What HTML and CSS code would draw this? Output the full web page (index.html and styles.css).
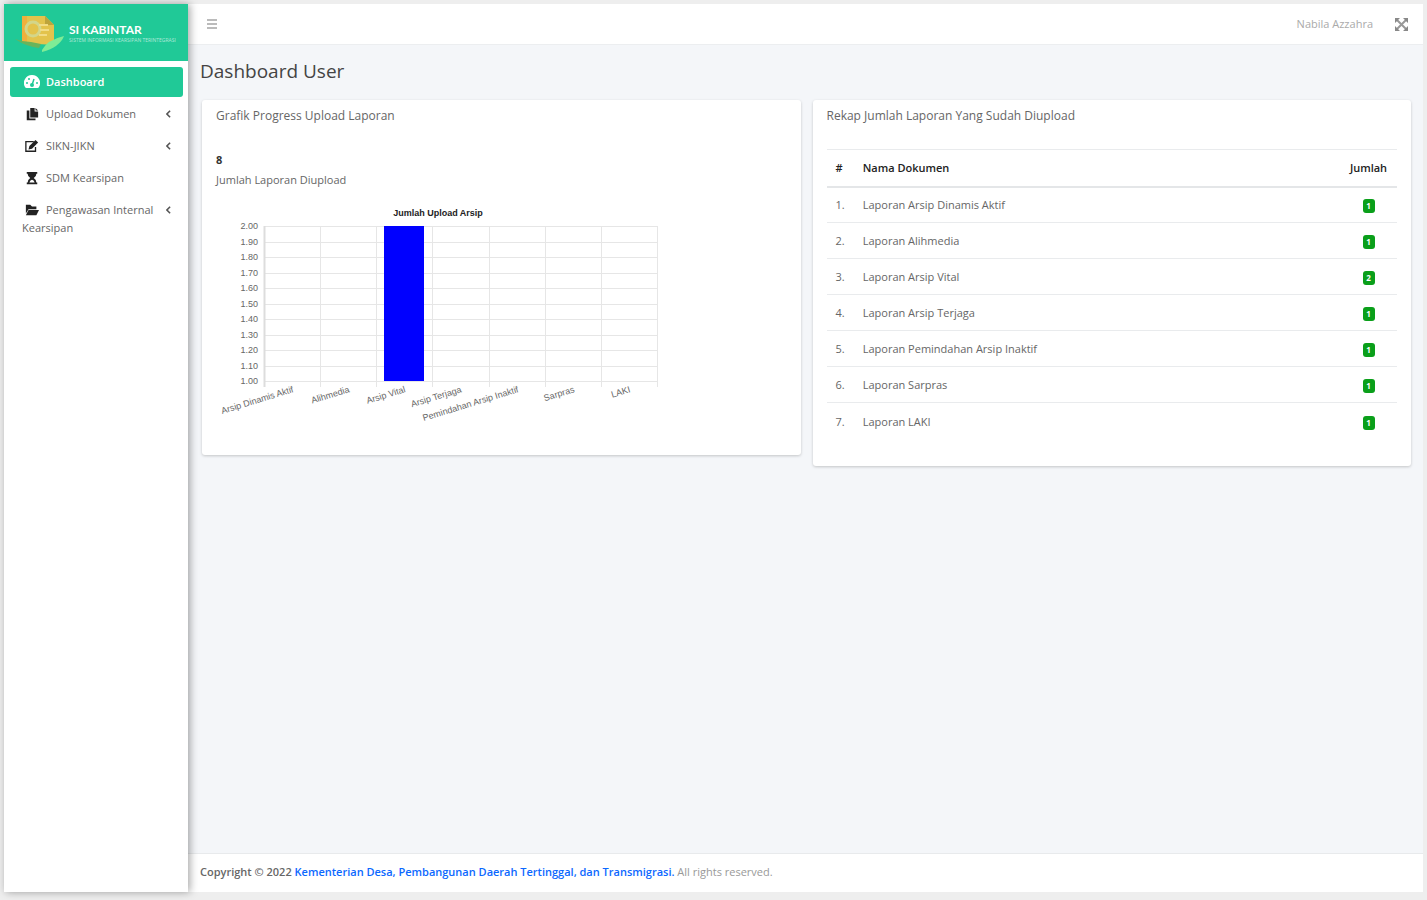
FILE: index.html
```html
<!DOCTYPE html>
<html lang="id">
<head>
  <meta charset="UTF-8">
  <meta name="viewport" content="width=device-width, initial-scale=1.0">
  <title>Dashboard User</title>
  <link rel="stylesheet" href="styles.css">
</head>
<body>

<div class="wrapper">
  <aside class="sidebar">
    <a href="#" class="brand">
      <svg class="brand-logo" width="54" height="42" viewBox="0 0 54 42">
        <path d="M11 4h23l9 9v20l-32-2z" fill="#e3c34c"/>
        <path d="M34 4v9h9z" fill="#bda43c"/>
        <path d="M11 4h5v27l-5-1z" fill="#f0b03c"/>
        <circle cx="22" cy="17" r="7" fill="none" stroke="#d3d68a" stroke-width="3"/>
        <path d="M28 13h9M29 18h9M28 23h8" stroke="#f2dc85" stroke-width="2"/>
        <path d="M4 27q8 3 16 3l10 2-2 4q-12-1-24-9z" fill="#68b45c"/>
        <path d="M31 38q5-10 22-14-4 11-22 16z" fill="#7fec96"/>
      </svg>
      <span class="brand-text">
        <strong>SI KABINTAR</strong>
        <small>SISTEM INFORMASI KEARSIPAN TERINTEGRASI</small>
      </span>
    </a>

    <nav class="menu">
      <a href="#" class="menu-item active">
        <svg class="icon" viewBox="0 0 16 16"><path fill="currentColor" d="M8 1a8 8 0 0 0-7 12q.5 1 1.500 1h11q1 0 1.500-1A8 8 0 0 0 8 1z"/><path d="M8 11l2-6" stroke="#20c997" stroke-width="1.500"/><g fill="#20c997"><circle cx="3" cy="9" r="1"/><circle cx="5" cy="5" r="1"/><circle cx="13" cy="9" r="1"/><circle cx="8" cy="11" r="2"/></g></svg>
        <span>Dashboard</span>
      </a>
      <a href="#" class="menu-item">
        <svg class="icon" viewBox="0 0 16 16"><path fill="currentColor" d="M6 1h5v4h4v7H6z"/><path fill="currentColor" d="M12 1l3 3h-3zM2 4h3v9h7v2H2z"/></svg>
        <span>Upload Dokumen</span>
        <svg class="arrow" viewBox="0 0 6 10"><path d="M5 1L1 5l4 4"/></svg>
      </a>
      <a href="#" class="menu-item">
        <svg class="icon" viewBox="0 0 16 16"><path fill="none" stroke="currentColor" stroke-width="1.500" d="M10 3H1v11h11V9"/><path fill="currentColor" d="M5 8l7-7 3 3-7 7-4 1z"/></svg>
        <span>SIKN-JIKN</span>
        <svg class="arrow" viewBox="0 0 6 10"><path d="M5 1L1 5l4 4"/></svg>
      </a>
      <a href="#" class="menu-item">
        <svg class="icon" viewBox="0 0 16 16"><path fill="currentColor" d="M2 1h12v2h-1q0 3-3 5 3 2 3 5h1v2H2v-2h1q0-3 3-5-3-2-3-5H2z"/><path fill="#fff" d="M5 13q1-3 3-3t3 3z"/></svg>
        <span>SDM Kearsipan</span>
      </a>
      <a href="#" class="menu-item">
        <svg class="icon" viewBox="0 0 16 16"><path fill="currentColor" d="M1 2h5l2 2h5v3H4l-3 5zM4 8h12l-3 6H1z"/></svg>
        <span>Pengawasan Internal</span>
        <svg class="arrow" viewBox="0 0 6 10"><path d="M5 1L1 5l4 4"/></svg>
        <span class="menu-rest">Kearsipan</span>
      </a>
    </nav>
  </aside>

  <div class="main">
    <header class="navbar">
      <button type="button" class="icon-button" aria-label="Menu">
        <svg width="12" height="12" viewBox="0 0 12 12"><path d="M1 2h10M1 6h10M1 10h10" stroke="#bbb" stroke-width="2"/></svg>
      </button>
      <a href="#" class="user">Nabila Azzahra</a>
      <button type="button" class="icon-button" aria-label="Layar penuh">
        <svg width="13" height="13" viewBox="0 0 13 13"><path d="M2 2l9 9M11 2l-9 9" stroke="#999" stroke-width="2"/><path d="M0 0h5L0 5zM13 0v5L8 0zM0 13V8l5 5zM13 13H8l5-5z" fill="#888"/></svg>
      </button>
    </header>

    <main class="content">
      <h1>Dashboard User</h1>
      <div class="cards">
        <section class="card">
          <h2>Grafik Progress Upload Laporan</h2>
          <div class="total">
            <strong>8</strong>
            <span>Jumlah Laporan Diupload</span>
          </div>
          <svg class="chart" width="450" height="233" viewBox="0 0 450 233">
            <text class="chart-title" x="222" y="18" text-anchor="middle">Jumlah Upload Arsip</text>
            <g id="chartGrid"></g>
            <g id="chartBars"></g>
          </svg>
        </section>

        <section class="card">
          <h2>Rekap Jumlah Laporan Yang Sudah Diupload</h2>
          <table>
            <thead>
              <tr><th class="no">#</th><th>Nama Dokumen</th><th class="jumlah">Jumlah</th></tr>
            </thead>
            <tbody>
              <tr><td>1.</td><td>Laporan Arsip Dinamis Aktif</td><td class="jumlah"><span class="badge">1</span></td></tr>
              <tr><td>2.</td><td>Laporan Alihmedia</td><td class="jumlah"><span class="badge">1</span></td></tr>
              <tr><td>3.</td><td>Laporan Arsip Vital</td><td class="jumlah"><span class="badge">2</span></td></tr>
              <tr><td>4.</td><td>Laporan Arsip Terjaga</td><td class="jumlah"><span class="badge">1</span></td></tr>
              <tr><td>5.</td><td>Laporan Pemindahan Arsip Inaktif</td><td class="jumlah"><span class="badge">1</span></td></tr>
              <tr><td>6.</td><td>Laporan Sarpras</td><td class="jumlah"><span class="badge">1</span></td></tr>
              <tr><td>7.</td><td>Laporan LAKI</td><td class="jumlah"><span class="badge">1</span></td></tr>
            </tbody>
          </table>
        </section>
      </div>
    </main>

    <footer class="footer">
      <strong>Copyright © 2022 <a href="#">Kementerian Desa, Pembangunan Daerah Tertinggal, dan Transmigrasi.</a></strong>
      All rights reserved.
    </footer>
  </div>
</div>

<script src="chart.js"></script>
</body>
</html>
```

FILE: styles.css
```css
* {
  box-sizing: border-box;
}

body {
  margin: 0;
  padding: 4px 4px 8px;
  background: #eee;
  color: #666;
  font-family: "Open Sans", "Noto Sans", sans-serif;
  font-size: 11px;
  line-height: 16px;
}

a {
  color: inherit;
  text-decoration: none;
}

strong,
th {
  font-weight: 600;
}

.wrapper {
  display: flex;
  min-height: calc(100vh - 12px);
}

.sidebar {
  flex: 0 0 184px;
  background: #fff;
  box-shadow: 2px 0 8px rgba(0, 0, 0, 0.35);
  z-index: 1;
}

.brand {
  display: flex;
  align-items: center;
  height: 57px;
  padding-left: 7px;
  background: #20c997;
  color: #fff;
}

.brand-logo {
  flex: none;
}

.brand-text {
  margin-left: 4px;
}

.brand-text strong,
.brand-text small {
  display: block;
  white-space: nowrap;
}

.brand-text strong {
  font-family: Lato, sans-serif;
  font-size: 12px;
  font-weight: bold;
  line-height: 14px;
}

.brand-text small {
  font-size: 5px;
  line-height: 6px;
  opacity: 0.6;
}

.menu {
  padding: 6px 5px 0 6px;
}

.menu-item {
  display: flex;
  flex-wrap: wrap;
  align-items: center;
  min-height: 30px;
  margin-bottom: 2px;
  padding: 6px 12px;
  border-radius: 3px;
  line-height: 18px;
}

.menu-item.active {
  background: #20c997;
  color: #fff;
  font-weight: 600;
}

.icon {
  width: 14px;
  height: 14px;
  margin: 0 7px 0 3px;
  color: #222;
}

.active .icon {
  width: 16px;
  height: 16px;
  margin: 0 6px 0 2px;
  color: #fff;
}

.arrow {
  width: 5px;
  height: 8px;
  margin-left: auto;
  fill: none;
  stroke: #555;
  stroke-width: 2;
}

.menu-rest {
  flex-basis: 100%;
}

.main {
  display: flex;
  flex: 1;
  flex-direction: column;
  min-width: 0;
  background: #f4f6f9;
}

.navbar {
  display: flex;
  align-items: center;
  height: 41px;
  padding: 0 15px 0 18px;
  border-bottom: 1px solid #eceef0;
  background: #fff;
}

.icon-button {
  display: flex;
  padding: 0;
  border: 0;
  background: none;
  cursor: pointer;
}

.user {
  margin: 0 22px 0 auto;
  color: #aaa;
}

.content {
  flex: 1;
  padding: 12px 12px 20px 14px;
}

h1 {
  margin: 0 0 15px -2px;
  color: #444;
  font-size: 19px;
  font-weight: normal;
  line-height: 28px;
}

.cards {
  display: grid;
  grid-template-columns: 1fr 1fr;
  align-items: start;
  gap: 12px;
}

.card {
  padding: 8px 14px 24px;
  border-radius: 3px;
  background: #fff;
  box-shadow: 0 1px 3px rgba(0, 0, 0, 0.2);
}

h2 {
  margin: 0;
  font-size: 12px;
  font-weight: normal;
  line-height: 16px;
}

.total {
  margin-top: 26px;
}

.total strong,
.total span {
  display: block;
  line-height: 20px;
}

.total strong {
  color: #333;
  font-weight: bold;
}

.chart {
  display: block;
  margin-top: 8px;
  font-family: "Liberation Sans", sans-serif;
  font-size: 9px;
  fill: #666;
}

.chart-title {
  fill: #222;
  font-weight: bold;
}

.grid-line {
  stroke: #e6e6e6;
}

.axis-line {
  stroke: #ddd;
  stroke-width: 2;
}

table {
  width: 100%;
  margin-top: 25px;
  border-collapse: collapse;
}

th,
td {
  height: 36px;
  padding: 0 9px;
  border-top: 1px solid #e9ebed;
  text-align: left;
}

th {
  height: 37px;
  border-bottom: 2px solid #e4e6e8;
  color: #222;
}

tr:last-child td {
  height: 39px;
}

.no {
  width: 27px;
}

.jumlah {
  width: 57px;
  padding: 0;
  text-align: center;
}

.badge {
  display: inline-block;
  width: 12px;
  border-radius: 3px;
  background: #0a9f1a;
  color: #fff;
  font-size: 8px;
  font-weight: bold;
  line-height: 14px;
}

.footer {
  height: 39px;
  padding: 10px 12px;
  border-top: 1px solid #e8eaec;
  background: #fff;
  color: #999;
}

.footer strong {
  color: #666;
}

.footer a {
  color: #0b68ff;
}
```

FILE: chart.js
```javascript
var data = [
  ['Arsip Dinamis Aktif', 1],
  ['Alihmedia', 1],
  ['Arsip Vital', 2],
  ['Arsip Terjaga', 1],
  ['Pemindahan Arsip Inaktif', 1],
  ['Sarpras', 1],
  ['LAKI', 1]
];
var left = 48, right = 441, top0 = 28, bottom = 183;
var step = (right - left) / data.length;
var grid = '', bars = '';

for (var i = 0; i <= 10; i++) {
  var y = Math.round(top0 + i * (bottom - top0) / 10);
  grid += '<path class="grid-line" d="M' + left + ' ' + (y + 0.5) + 'H' + right + '"/>';
  grid += '<text x="42" y="' + (y + 3) + '" text-anchor="end">' + (2 - i / 10).toFixed(2) + '</text>';
}

for (var j = 0; j <= data.length; j++) {
  var x = Math.round(left + j * step);
  grid += '<path class="' + (j === 0 ? 'axis-line' : 'grid-line') + '" d="M' + (x + 0.5) + ' ' + top0 + 'V' + (bottom + 6) + '"/>';
}

data.forEach(function (item, n) {
  var height = (item[1] - 1) * (bottom - top0);
  var x = Math.round(left + n * step + 8);
  bars += '<rect x="' + x + '" y="' + (bottom - height) + '" width="40" height="' + height + '" fill="#0000ff"/>';
  bars += '<text text-anchor="end" transform="translate(' + (x + 22) + ' ' + (bottom + 11) + ') rotate(-17)">' + item[0] + '</text>';
});

document.getElementById('chartGrid').innerHTML = grid;
document.getElementById('chartBars').innerHTML = bars;
```
